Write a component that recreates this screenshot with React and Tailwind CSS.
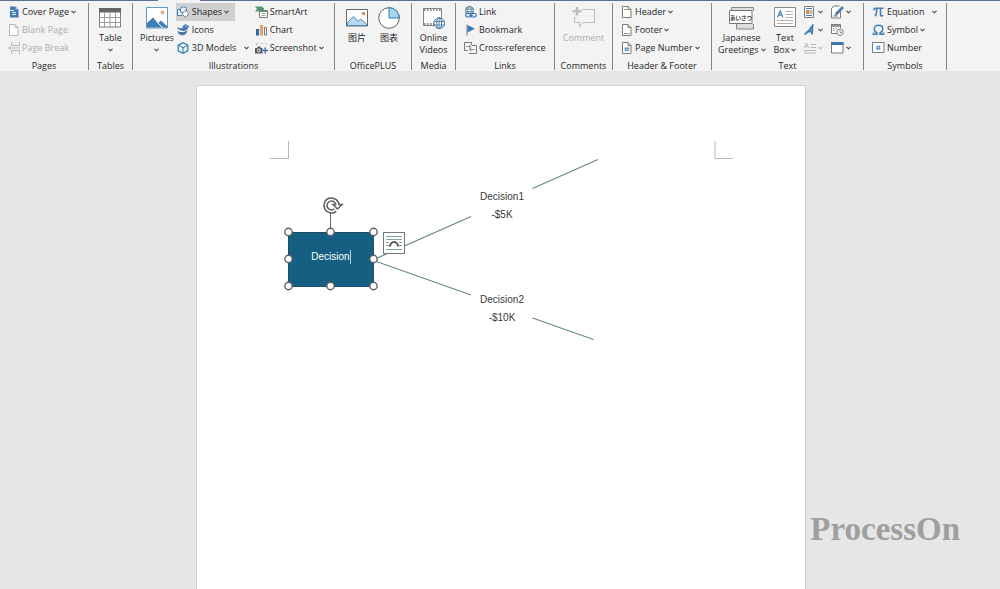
import React from "react";

const GRAY = "#7a7a7a";
const BLUE = "#3f7fb5";

function Svg({ w, h, children }) {
  return (
    <svg width={w} height={h} viewBox={`0 0 ${w} ${h}`} fill="none" className="shrink-0" aria-hidden="true">
      {children}
    </svg>
  );
}

function Chevron({ faded }) {
  return (
    <Svg w={5} h={4}>
      <path d="M.5 .8 2.5 2.8 4.5 .8" stroke={faded ? "#b5b5b5" : "#444"} strokeWidth="1.1" />
    </Svg>
  );
}

/* Small icons */
const CoverIcon = () => (
  <Svg w={12} h={12}>
    <path d="M2 .5h5.500L10.500 3.500v8H2z" fill="#3f78b0" />
    <path d="M7.500 .5v3h3" fill="#a9c8e6" />
    <path d="M1 4.500h5M4 6.500h4M4 8.500h4" stroke="#e8f1fa" />
  </Svg>
);
const PageIcon = ({ stroke = GRAY, children }) => (
  <Svg w={12} h={12}>
    <path d="M1.500 .5h5.500l3 3v8h-8.500z" fill="#fff" stroke={stroke} />
    <path d="M7 .5v3h3" stroke={stroke} />
    {children}
  </Svg>
);
const BreakIcon = () => (
  <Svg w={12} h={12}>
    <path d="M3.500 0v3.500h8V0M3.500 12V8.500h8V12M4 6h8M0 6h3M1.500 4 3.200 6 1.500 8" stroke="#b5b5b5" />
  </Svg>
);
const ShapesIcon = () => (
  <Svg w={14} h={12}>
    <path d="M6 9.500H1.500v-6H5" stroke={BLUE} fill="#e6f0f9" />
    <circle cx="7.500" cy="4" r="3.200" fill="#e9f2fa" stroke={BLUE} />
    <path d="m9.500 4.200 3.700 3.600-3.700 3.700-3.700-3.700z" fill="#f3f3f3" stroke={GRAY} />
  </Svg>
);
const IconsIcon = () => (
  <Svg w={14} h={12}>
    <path d="M6.500 4C6.500 1.500 8 .3 9.800.5c1 0 1.700.7 2 1.300l1.700.2-1.500 1.500C12 6 9.500 7.200 6.500 6.800 4 6.500 1.500 5.500 1 3c2 1.200 3.700 1.500 5.500 1z" fill={BLUE} />
    <path d="M1.500 6.500c2 2 5.500 2 10 0-.3 3.300-3 5-5.500 4.800-2.500 0-4.300-2-4.500-4.800z" fill="#54789a" />
    <circle cx="10" cy="2.300" r=".6" fill="#fff" />
  </Svg>
);
const CubeIcon = () => (
  <Svg w={14} h={12}>
    <path d="m7 .7 4.800 2.500v5.600L7 11.300 2.200 8.800V3.200z" fill="#eaf4fb" stroke="#2b7cab" strokeWidth="1.200" />
    <path d="M2.200 3.200 7 5.800l4.800-2.600M7 5.800v5.500" stroke="#2b7cab" />
  </Svg>
);
const SmartArtIcon = () => (
  <Svg w={13} h={12}>
    <path d="M0 .5h7l2.500 2.500L7 5.500H0L2 3z" fill="#4f9a78" />
    <path d="M4.500 4.500h8v7h-8z" fill="#fff" stroke={GRAY} />
    <path d="M5 5.500h7" stroke="#4f9a78" />
    <path d="M6.500 7.500h4M6.500 9.500h4" stroke="#a5a5a5" />
  </Svg>
);
const ChartIcon = () => (
  <Svg w={13} h={12}>
    <path d="M1 5h3v6.500H1z" fill="#35679b" />
    <path d="M5 1h3v10.500H5z" fill="#dba45f" />
    <path d="M9.500 3.500h2v7.500h-2z" fill="#fff" stroke={GRAY} />
  </Svg>
);
const ScreenshotIcon = () => (
  <Svg w={13} h={12}>
    <path d="M1.500 3.500v-2h2M6 1.500h2M10.500 1.500h1v2" stroke="#aaa" strokeDasharray="1.500 1" />
    <path d="M0 6h2l1-1.500h2L6 6h1.500v5.500H0z" fill="#5a5a5a" />
    <circle cx="3.800" cy="8.500" r="1.500" fill="#5a5a5a" stroke="#fff" strokeWidth=".9" />
    <path d="M10.200 5.500v6M7.500 8.500H13" stroke="#2f6fb0" strokeWidth="1.300" />
  </Svg>
);
const LinkIcon = () => (
  <Svg w={13} h={12}>
    <circle cx="5.500" cy="4.500" r="4" stroke="#4a7396" />
    <ellipse cx="5.500" cy="4.500" rx="1.800" ry="4" stroke="#4a7396" strokeWidth=".8" />
    <path d="M1.500 3.200h8M1.500 5.800h8" stroke="#4a7396" strokeWidth=".8" />
    <rect x="1.700" y="7.500" width="5.500" height="3.500" rx="1.700" fill="#f3f3f3" stroke="#2f6fb0" strokeWidth="1.200" />
    <rect x="6.700" y="7.500" width="5.500" height="3.500" rx="1.700" fill="#f3f3f3" stroke="#2f6fb0" strokeWidth="1.200" />
    <path d="M5 9.300h4" stroke="#2f6fb0" />
  </Svg>
);
const BookmarkIcon = () => (
  <Svg w={13} h={12}>
    <path d="M3 .5v11" stroke="#777" />
    <path d="M3.500 1 11 4.700 3.500 8.500z" fill="#3f78b8" />
  </Svg>
);
const CrossIcon = () => (
  <Svg w={13} h={12}>
    <path d="M3.500 8.500h-3v-8h7V3" stroke={GRAY} />
    <path d="M5 11.500h7.500v-8H8" stroke={GRAY} />
    <path d="M2 4.500h5M5 2.800l2 1.700-2 1.700M10.500 7.500h-5M7.300 5.900l-2 1.600 2 1.700" stroke="#7c7c7c" strokeWidth=".8" />
  </Svg>
);
const PartsIcon = () => (
  <Svg w={12} h={12}>
    <path d="M.5 .5h9v11h-9z" fill="#fff" stroke={GRAY} />
    <path d="M2 2.500h6M2 9.500h6" stroke={BLUE} />
    <path d="M2 4h3.500v4H2z" fill="#d58b4b" />
    <path d="M6 5h2.500M6 7h2.500" stroke="#777" />
  </Svg>
);
const SignIcon = () => (
  <Svg w={13} h={14}>
    <path d="M9.500 6.500V13H.5V3.500L3 1h5.500" fill="#fff" stroke={GRAY} />
    <path d="m4 10.500 1-3L11 1.500l1.500 1.500L7 9z" fill={BLUE} stroke="#4b6d8b" strokeWidth=".6" />
    <path d="M2 11h5" stroke={GRAY} />
  </Svg>
);
const WordArtIcon = () => (
  <Svg w={12} h={12}>
    <path d="M.5 10.500C3.500 9 6 5.500 8.500 1.800L8 10.500M2.500 7.500h6" stroke="#3f7fb5" strokeWidth="1.900" />
  </Svg>
);
const DateIcon = () => (
  <Svg w={13} h={12}>
    <path d="M6 9.500H.5v-9h9V4" fill="#fff" stroke={GRAY} />
    <path d="M.5 2h9" stroke={GRAY} strokeWidth="1.500" />
    <path d="M2 4.500h5M2 6.500h3" stroke="#999" strokeDasharray="1.500 1" />
    <circle cx="9" cy="8.200" r="3.200" fill="#fff" stroke={GRAY} />
    <path d="M9 6.300v2.200h1.800" stroke={GRAY} />
  </Svg>
);
const DropCapIcon = () => (
  <Svg w={12} h={12}>
    <path d="M.5 6 2.500 1l2 5M1.200 4.300h2.600M6.500 2.500H12M6.500 5.500H12M0 8.500h12M0 11h12" stroke="#b5b5b5" />
  </Svg>
);
const ObjectIcon = () => (
  <Svg w={13} h={12}>
    <path d="M.5 .5h11.500v10.500H.5z" fill="#fff" stroke={GRAY} />
    <path d="M0 0h12.500v3H0z" fill="#3f78b0" />
  </Svg>
);
const NumberIcon = () => (
  <Svg w={13} h={12}>
    <path d="M.5 .5h11.500v10H.5z" fill="#fff" stroke={GRAY} />
    <path d="M5.500 3.500 5 8M7.500 3.500 7 8M4 4.800h4.500M4 6.700h4.500" stroke={BLUE} strokeWidth=".8" />
  </Svg>
);
const PiIcon = () => (
  <Svg w={13} h={12}>
    <path d="M1.500 4.200C2 2.700 2.700 2.300 4 2.300h7.500M4.800 2.500C4.800 6 4.500 8.500 3 10.300M8.500 2.500V8.500c0 1.600 1.500 1.800 2.500.8" stroke={BLUE} strokeWidth="1.600" />
  </Svg>
);
const OmegaIcon = () => (
  <Svg w={13} h={12}>
    <path d="M1.500 8.500V10.300H5V9C3 7.800 2.200 6.500 2.200 4.900 2.200 2.700 4 1.200 6.500 1.200s4.300 1.500 4.300 3.700C10.800 6.500 10 7.800 8 9v1.300h3.500V8.500" stroke={BLUE} strokeWidth="1.500" />
  </Svg>
);

/* Large icons */
const TableIcon = () => (
  <Svg w={22} h={22}>
    <path d="M.5 1.500h21v18.500H.5z" fill="#fff" stroke={GRAY} />
    <path d="M0 1h22v4.500H0z" fill="#646464" />
    <path d="M5.500 5v15M11 5v15M16.500 5v15M0 10.500h22M0 15.500h22" stroke="#9a9a9a" />
  </Svg>
);
const PicturesIcon = () => (
  <Svg w={22} h={22}>
    <path d="M.5 .5h21v20.500H.5z" fill="#fff" stroke={BLUE} strokeWidth=".8" />
    <circle cx="16.500" cy="5.500" r="2" fill="#e2b583" />
    <path d="M1 20.500V16l6-5.500 5 5.500 3-2.500 6.500 6v1z" fill={BLUE} />
    <path d="m10.500 14.500 6 6" stroke="#fff" />
  </Svg>
);
const PlusPictureIcon = () => (
  <Svg w={22} h={22}>
    <path d="M.5 2.500h21v16.500H.5z" fill="#fff" stroke="#666" />
    <circle cx="17.500" cy="6.500" r="1.800" fill="#d88b48" />
    <path d="M1.500 18.500v-3l6-6 4.500 5 2.500-2.500 6 5v1.500z" fill="#b6daf3" stroke={BLUE} strokeWidth=".9" />
  </Svg>
);
const PieIcon = () => (
  <Svg w={22} h={22}>
    <circle cx="11" cy="11" r="10.300" fill="#fff" stroke="#666" />
    <path d="M11 .7A10.300 10.300 0 0 1 21.300 11H11z" fill="#a7d3f0" stroke="#2b7cab" />
  </Svg>
);
const VideoIcon = () => (
  <Svg w={22} h={22}>
    <path d="M.5 1.500h18v17H.5z" fill="#fff" stroke="#858585" />
    <path d="M1 3h17M1 17h17" stroke="#666" strokeWidth="1.500" strokeDasharray="1.500 1.500" />
    <circle cx="16.200" cy="16.200" r="5.300" fill="#fff" stroke="#3d739f" />
    <ellipse cx="16.200" cy="16.200" rx="2.400" ry="5.300" stroke="#3d739f" />
    <path d="M11 14.500h10.500M11 18h10.500M16.200 11v10.500" stroke="#3d739f" strokeWidth=".8" />
  </Svg>
);
const CommentIcon = () => (
  <Svg w={24} h={22}>
    <path d="M10 2.500h12.500v13H11l-3.500 4.500v-4.500H2.500V9.500" stroke="#bdbdbd" />
    <path d="M5 0v8.500M.5 4.200h9" stroke="#bdbdbd" strokeWidth="2.500" />
  </Svg>
);
const GreetingsIcon = () => (
  <svg width="26" height="24" viewBox="0 0 26 24" fill="none" className="shrink-0" aria-hidden="true">
    <path d="M2.500 4V.5h22V4M7.500 17v5h17V17" stroke="#888" fill="#ddd" />
    <path d="M.5 3.500h22.500v13H.5z" fill="#fff" stroke="#777" />
    <text x="12" y="12.500" textAnchor="middle" fontSize="5.500" fontWeight="bold" fill="#444" fontFamily="'Noto Sans CJK JP', sans-serif">
      あいさつ
    </text>
  </svg>
);
const TextBoxIcon = () => (
  <Svg w={22} h={22}>
    <path d="M.5 .5h21v19H.5z" fill="#fff" stroke="#888" />
    <path d="M3.500 10.500 6.200 4l2.800 6.500M4.500 8.200h3.700" stroke={BLUE} strokeWidth="1.200" />
    <path d="M11.500 4.500H19M11.500 7.500H19M11.500 10.500H19M3 13.500h16M3 16.500h16" stroke="#b0b0b0" />
  </Svg>
);

function Group({ label, width, children }) {
  return (
    <section aria-label={label} className={`flex shrink-0 flex-col border-r border-[#858585] ${width}`}>
      <div className="flex h-[55px]">{children}</div>
      <h2 className="h-3 text-center leading-4 whitespace-nowrap">{label}</h2>
    </section>
  );
}

function Small({ icon, label, menu, wide, active, disabled }) {
  return (
    <button
      type="button"
      disabled={disabled}
      className={`flex h-[18px] items-center gap-0.5 whitespace-nowrap ${active ? "bg-[#d0d0d0] pr-1.5" : ""} ${disabled ? "text-[#adadad]" : ""}`}
    >
      {icon}
      <span>{label}</span>
      {menu && <span className={wide ? "pl-1.5" : ""}><Chevron /></span>}
    </button>
  );
}

function Large({ icon, lines, menu, below, disabled }) {
  return (
    <button type="button" disabled={disabled} className={`flex flex-col items-center pt-1 whitespace-nowrap ${disabled ? "text-[#adadad]" : ""}`}>
      <span className="flex h-[25px] items-start">{icon}</span>
      {lines.map((line, i) => (
        <span key={line} className="flex items-center gap-0.5 leading-3">
          {line}
          {menu && i === lines.length - 1 && <Chevron />}
        </span>
      ))}
      {below && <span className="flex h-3 items-center"><Chevron /></span>}
    </button>
  );
}

function IconOnly({ icon, name, menu, disabled }) {
  return (
    <button type="button" aria-label={name} disabled={disabled} className="flex h-[18px] items-center gap-0.5">
      {icon}
      {menu && <Chevron faded={disabled} />}
    </button>
  );
}

function Ribbon() {
  return (
    <header className="shrink-0 overflow-hidden bg-[#f3f3f3] font-['Open_Sans','Noto_Sans_CJK_SC',sans-serif] text-[9px] text-[#1f1f1f]">
      <div className="flex h-px">
        <div className="w-[158px] bg-[#5c7099]" />
        <div className="w-[42px] bg-[#f3f3f3]" />
        <div className="flex-1 bg-[#5c7099]" />
      </div>
      <div className="flex pt-0.5 pb-px">
        <Group label="Pages" width="w-[89px]">
          <div className="flex flex-col items-start pl-2">
            <Small icon={<CoverIcon />} label="Cover Page" menu />
            <Small icon={<PageIcon stroke="#b5b5b5" />} label="Blank Page" disabled />
            <Small icon={<BreakIcon />} label="Page Break" disabled />
          </div>
        </Group>
        <Group label="Tables" width="w-11">
          <div className="flex flex-1 justify-center">
            <Large icon={<TableIcon />} lines={["Table"]} below />
          </div>
        </Group>
        <Group label="Illustrations" width="w-[202px]">
          <div className="flex gap-0.5 pl-[7px]">
            <Large icon={<PicturesIcon />} lines={["Pictures"]} below />
            <div className="flex w-[77px] flex-col items-start">
              <Small icon={<ShapesIcon />} label="Shapes" menu active />
              <Small icon={<IconsIcon />} label="Icons" />
              <Small icon={<CubeIcon />} label="3D Models" menu wide />
            </div>
            <div className="flex flex-col items-start">
              <Small icon={<SmartArtIcon />} label="SmartArt" />
              <Small icon={<ChartIcon />} label="Chart" />
              <Small icon={<ScreenshotIcon />} label="Screenshot" menu />
            </div>
          </div>
        </Group>
        <Group label="OfficePLUS" width="w-[77px]">
          <div className="flex flex-1 justify-center gap-[10px]">
            <Large icon={<PlusPictureIcon />} lines={["图片"]} />
            <Large icon={<PieIcon />} lines={["图表"]} />
          </div>
        </Group>
        <Group label="Media" width="w-11">
          <div className="flex flex-1 justify-center">
            <Large icon={<VideoIcon />} lines={["Online", "Videos"]} />
          </div>
        </Group>
        <Group label="Links" width="w-[99px]">
          <div className="flex flex-col items-start pl-2">
            <Small icon={<LinkIcon />} label="Link" />
            <Small icon={<BookmarkIcon />} label="Bookmark" />
            <Small icon={<CrossIcon />} label="Cross-reference" />
          </div>
        </Group>
        <Group label="Comments" width="w-[58px]">
          <div className="flex flex-1 justify-center">
            <Large icon={<CommentIcon />} lines={["Comment"]} disabled />
          </div>
        </Group>
        <Group label="Header & Footer" width="w-[99px]">
          <div className="flex flex-col items-start pl-2">
            <Small icon={<PageIcon><path d="M3 3.500h3" stroke="#7fa37a" /></PageIcon>} label="Header" menu />
            <Small icon={<PageIcon><path d="M3 9.500h5.500" stroke="#7fa37a" /></PageIcon>} label="Footer" menu />
            <Small icon={<PageIcon><path d="M5 5 4.500 9.500M7.200 5 6.700 9.500M3.500 6.300h5M3.500 8.200h5" stroke={BLUE} strokeWidth=".8" /></PageIcon>} label="Page Number" menu />
          </div>
        </Group>
        <Group label="Text" width="w-[152px]">
          <div className="flex gap-2 pl-1.5">
            <Large icon={<GreetingsIcon />} lines={["Japanese", "Greetings"]} menu />
            <Large icon={<TextBoxIcon />} lines={["Text", "Box"]} menu />
            <div className="flex flex-col items-start">
              <IconOnly name="Quick Parts" icon={<PartsIcon />} menu />
              <IconOnly name="WordArt" icon={<WordArtIcon />} menu />
              <IconOnly name="Drop Cap" icon={<DropCapIcon />} menu disabled />
            </div>
            <div className="flex flex-col items-start">
              <IconOnly name="Signature Line" icon={<SignIcon />} menu />
              <IconOnly name="Date and Time" icon={<DateIcon />} />
              <IconOnly name="Object" icon={<ObjectIcon />} menu />
            </div>
          </div>
        </Group>
        <Group label="Symbols" width="w-[83px]">
          <div className="flex flex-col items-start pl-2">
            <Small icon={<PiIcon />} label="Equation" menu wide />
            <Small icon={<OmegaIcon />} label="Symbol" menu />
            <Small icon={<NumberIcon />} label="Number" />
          </div>
        </Group>
      </div>
    </header>
  );
}

const handles = [
  [91, 146], [133, 146], [176, 146],
  [91, 173], [176, 173],
  [91, 200], [133, 200], [176, 200],
];

function Diagram() {
  return (
    <div className="relative h-80 font-['Liberation_Sans',sans-serif] text-[10px] leading-[18px] text-[#3a3a3a]">
      <svg width="608" height="320" viewBox="0 0 608 320" fill="none" className="absolute top-0 left-0" aria-hidden="true">
        <path d="M73 72.500h18.500V55M536 72.500H518V55" stroke="#b8b8b8" />
        <path d="M178 173 274 130.500M178 175l96 34M335.500 102.500 401 73.500M335.500 232l61 21.500" stroke="#64898c" strokeWidth="1.200" />
      </svg>
      <div className="absolute top-[146px] left-[91px] flex h-[55px] w-[86px] items-center justify-center border border-dotted border-[#263c48] bg-[#156082] pb-1.5 text-white">
        Decision
        <span className="h-3.5 w-px bg-white/70" />
      </div>
      <svg width="608" height="320" viewBox="0 0 608 320" fill="none" className="pointer-events-none absolute top-0 left-0" aria-hidden="true">
        <path d="M133.500 127v16" stroke="#666" />
        {handles.map(([x, y]) => (
          <circle key={`${x}-${y}`} cx={x + 0.5} cy={y} r="3.700" fill="#fff" stroke="#5f5f5f" strokeWidth="1.400" />
        ))}
        <path d="M140.500 119.500a6 6 0 1 0-2.200 4.600" stroke="#5f5f5f" strokeWidth="4.600" />
        <path d="M136 118.500h9l-4.500 4.500z" fill="#fff" stroke="#5f5f5f" strokeWidth="1.500" />
        <path d="M140.500 119.500a6 6 0 1 0-2.200 4.600" stroke="#fff" strokeWidth="1.600" />
      </svg>
      <button type="button" aria-label="Layout Options" className="absolute top-[146px] left-[186px] flex size-[22px] items-center justify-center border border-[#777] bg-white">
        <Svg w={18} h={18}>
          <path d="M1 2.500h16M1 5.500h16M1 8.500h3M14 8.500h3M1 11.500h3M14 11.500h3M1 15.500h16" stroke="#7fa59f" />
          <path d="M5 12.500a4 4.500 0 0 1 8 0" stroke="#555" strokeWidth="2" />
        </Svg>
      </button>
      <p className="absolute top-[102px] left-[274px] w-[62px] text-center">Decision1<br />-$5K</p>
      <p className="absolute top-[205px] left-[274px] w-[62px] text-center">Decision2<br />-$10K</p>
    </div>
  );
}

export default function App() {
  return (
    <div className="flex min-h-screen flex-col bg-[#e6e6e6]">
      <Ribbon />
      <main className="relative flex flex-1 flex-col items-center pt-3.5 pl-0.5">
        <article className="w-full max-w-[610px] flex-1 border border-b-0 border-[#d0d0d0] bg-white">
          <Diagram />
        </article>
        <p className="absolute right-10 bottom-10 font-['Liberation_Serif',serif] text-[33px] leading-10 font-bold text-[#9f9f9f]">ProcessOn</p>
      </main>
    </div>
  );
}
